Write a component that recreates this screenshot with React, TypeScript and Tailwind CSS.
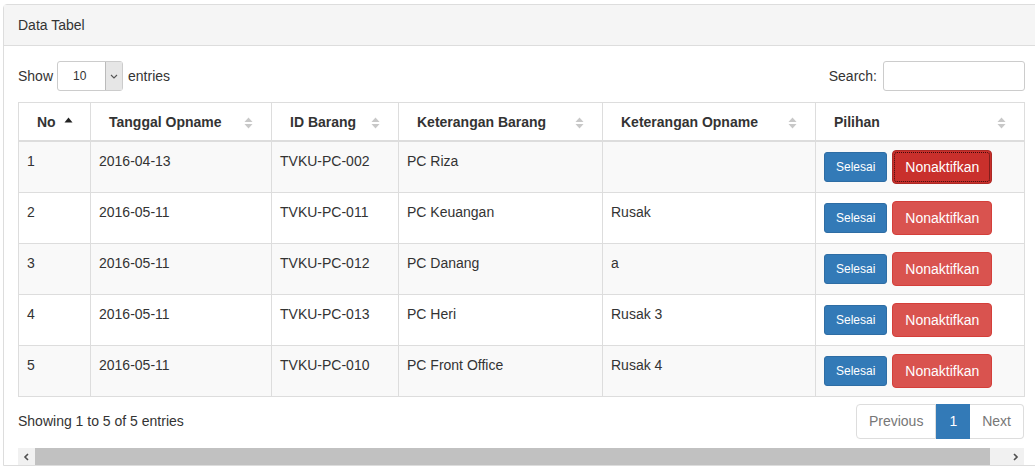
import React from "react";

const rows = [
  { no: 1, tgl: "2016-04-13", id: "TVKU-PC-002", barang: "PC Riza", opname: "" },
  { no: 2, tgl: "2016-05-11", id: "TVKU-PC-011", barang: "PC Keuangan", opname: "Rusak" },
  { no: 3, tgl: "2016-05-11", id: "TVKU-PC-012", barang: "PC Danang", opname: "a" },
  { no: 4, tgl: "2016-05-11", id: "TVKU-PC-013", barang: "PC Heri", opname: "Rusak 3" },
  { no: 5, tgl: "2016-05-11", id: "TVKU-PC-010", barang: "PC Front Office", opname: "Rusak 4" },
];

function SortBoth() {
  return (
    <svg width="9" height="12" viewBox="0 0 9 12" className="absolute right-[18px] top-[14px]">
      <path d="M4.5 0.5 L8.5 5 H0.5 Z" fill="#c8c8c8" />
      <path d="M4.5 11.5 L8.5 7 H0.5 Z" fill="#c8c8c8" />
    </svg>
  );
}

function SortAsc() {
  return (
    <svg width="9" height="6" viewBox="0 0 9 6" className="absolute right-[17px] top-[14px]">
      <path d="M4.5 0.5 L8.5 5.5 H0.5 Z" fill="#222" />
    </svg>
  );
}

const headers = [
  { label: "No", w: "w-[72px]", asc: true },
  { label: "Tanggal Opname", w: "w-[181px]" },
  { label: "ID Barang", w: "w-[127px]" },
  { label: "Keterangan Barang", w: "w-[204px]" },
  { label: "Keterangan Opname", w: "w-[213px]" },
  { label: "Pilihan", w: "w-[209px]" },
];

export default function App() {
  return (
    <div
      className="w-[1035px] h-[466px] overflow-hidden bg-white text-[14px] text-[#333] pt-[4px] pl-[3px]"
      style={{ fontFamily: '"Liberation Sans", Arial, sans-serif' }}
    >
      <div className="w-[1060px] border border-[#ddd] rounded-t-[4px]">
        <div className="h-[41px] bg-[#f5f5f5] border-b border-[#ddd] px-[14px] flex items-center">
          Data Tabel
        </div>
        <div className="pl-[14px] pt-[15px] w-[1021px]">
          <div className="flex items-center justify-between h-[30px]">
            <div className="flex items-center">
              <span>Show</span>
              <div className="ml-[4px] w-[66px] h-[30px] border border-[#ccc] rounded-[3px] flex">
                <span className="flex-1 text-[12px] pl-[15px] flex items-center">10</span>
                <span className="w-[17px] h-full bg-[#e6e6e6] border-l border-[#bbb] flex items-center justify-center">
                  <svg width="8" height="5" viewBox="0 0 8 5">
                    <path d="M1 1 L4 4 L7 1" stroke="#555" strokeWidth="1.1" fill="none" />
                  </svg>
                </span>
              </div>
              <span className="ml-[5px]">entries</span>
            </div>
            <div className="flex items-center">
              <span>Search:</span>
              <div className="ml-[6px] w-[142px] h-[30px] border border-[#ccc] rounded-[3px] bg-white" />
            </div>
          </div>

          <table className="mt-[11px] w-[1006px] table-fixed border-collapse border border-[#ddd]">
            <thead>
              <tr>
                {headers.map((h) => (
                  <th
                    key={h.label}
                    className={`${h.w} relative text-left font-bold pt-[9px] pb-[8px] pl-[18px] pr-[30px] border border-[#ddd] border-b-2 leading-[20px] whitespace-nowrap`}
                  >
                    {h.label}
                    {h.asc ? <SortAsc /> : <SortBoth />}
                  </th>
                ))}
              </tr>
            </thead>
            <tbody>
              {rows.map((r, i) => (
                <tr key={r.no} className={i % 2 === 0 ? "bg-[#f9f9f9]" : "bg-white"}>
                  <td className="p-[8px] pt-[9px] align-top leading-[20px] border border-[#ddd]">{r.no}</td>
                  <td className="p-[8px] pt-[9px] align-top leading-[20px] border border-[#ddd]">{r.tgl}</td>
                  <td className="p-[8px] pt-[9px] align-top leading-[20px] border border-[#ddd]">{r.id}</td>
                  <td className="p-[8px] pt-[9px] align-top leading-[20px] border border-[#ddd]">{r.barang}</td>
                  <td className="p-[8px] pt-[9px] align-top leading-[20px] border border-[#ddd]">{r.opname}</td>
                  <td className="p-[8px] align-top border border-[#ddd]">
                    <div className="flex items-center gap-[5px] h-[34px]">
                      <span className="h-[30px] px-[11px] flex items-center text-[12px] text-white bg-[#337ab7] border border-[#2e6da4] rounded-[3px]">
                        Selesai
                      </span>
                      {i === 0 ? (
                        <span className="relative h-[34px] px-[12px] flex items-center text-white bg-[#c9302c] border border-[#ac2925] rounded-[4px]">
                          <span className="absolute inset-[1px] border border-dotted border-[#3a0a0a] rounded-[3px]" />
                          Nonaktifkan
                        </span>
                      ) : (
                        <span className="h-[34px] px-[12px] flex items-center text-white bg-[#d9534f] border border-[#d43f3a] rounded-[4px]">
                          Nonaktifkan
                        </span>
                      )}
                    </div>
                  </td>
                </tr>
              ))}
            </tbody>
          </table>

          <div className="mt-[7px] w-[1006px] flex items-center justify-between">
            <span>Showing 1 to 5 of 5 entries</span>
            <div className="flex h-[35px] leading-[21px]">
              <span className="px-[12px] py-[6px] text-[#777] border border-[#ddd] rounded-l-[4px]">Previous</span>
              <span className="px-[12px] py-[6px] text-white bg-[#337ab7] border border-[#337ab7]">1</span>
              <span className="px-[12px] py-[6px] text-[#777] border border-[#ddd] border-l-0 rounded-r-[4px]">Next</span>
            </div>
          </div>

          <div className="mt-[9px] w-[1006px] h-[17px] bg-[#f1f1f1] flex">
            <div className="w-[17px] h-full flex items-center justify-center">
              <svg width="7" height="8" viewBox="0 0 7 8">
                <path d="M5 1 L2 4 L5 7" stroke="#505050" strokeWidth="1.6" fill="none" />
              </svg>
            </div>
            <div className="w-[955px] h-full bg-[#c1c1c1]" />
            <div className="flex-1" />
            <div className="w-[17px] h-full flex items-center justify-center">
              <svg width="7" height="8" viewBox="0 0 7 8">
                <path d="M2 1 L5 4 L2 7" stroke="#505050" strokeWidth="1.6" fill="none" />
              </svg>
            </div>
          </div>
        </div>
      </div>
    </div>
  );
}
